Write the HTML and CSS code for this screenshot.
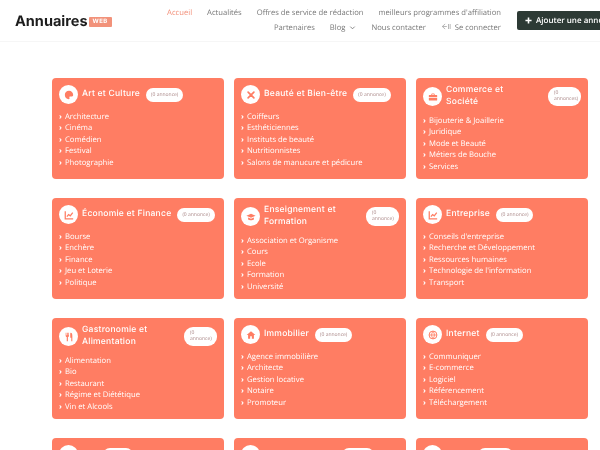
FILE: index.html
```html
<!DOCTYPE html>
<html lang="fr">
<head>
<meta charset="utf-8">
<title>Annuaires Web</title>
<link rel="stylesheet" href="styles.css">
</head>
<body>
<header class="site-header">
  <a class="logo">Annuaires <span class="logo-tag">WEB</span></a>
  <nav class="nav">
    <div class="nav-row">
      <a class="nav-active">Accueil</a>
      <a>Actualités</a>
      <a>Offres de service de rédaction</a>
      <a>meilleurs programmes d'affiliation</a>
    </div>
    <div class="nav-row">
      <a>Partenaires</a>
      <a>Blog <svg class="chev" viewBox="0 0 8 8"><path d="M1.500 3 4 5.500 6.500 3" fill="none" stroke="currentColor" stroke-width="1"/></svg></a>
      <a>Nous contacter</a>
      <a><svg class="login" viewBox="0 0 12 8"><path d="M5 1 1.500 4 5 7M1.500 4H7M9 1v6M11 1v6" fill="none" stroke="currentColor" stroke-width="1"/></svg>Se connecter</a>
    </div>
  </nav>
  <a class="add-btn"><svg class="plus" viewBox="0 0 8 8"><path d="M4 .5v7M.5 4h7" stroke="#fff" stroke-width="1.800"/></svg>Ajouter une annonce</a>
</header>
<main class="grid">
  <section class="card">
    <div class="head">
      <span class="icon"><svg viewBox="0 0 12 12"><path d="M6 1C3 1 1 3.200 1 6s2.200 5 4.500 5c1.300 0 1.300-1 1-1.700C6.200 8.500 6.700 7.800 7.600 7.800H9.500C10.500 7.800 11 7 11 5.800 11 3 8.800 1 6 1Z"/></svg></span>
      <h2 class="title">Art et Culture</h2>
      <span class="badge">(0 annonce)</span>
    </div>
    <ul class="list"><li>Architecture</li><li>Cinéma</li><li>Comédien</li><li>Festival</li><li>Photographie</li></ul>
  </section>
  <section class="card">
    <div class="head">
      <span class="icon"><svg viewBox="0 0 12 12"><path d="M2.500 2.500 9.500 9.500M9.500 2.500 2.500 9.500" stroke="#ff7d63" stroke-width="2" stroke-linecap="round"/></svg></span>
      <h2 class="title">Beauté et Bien-être</h2>
      <span class="badge">(0 annonce)</span>
    </div>
    <ul class="list"><li>Coiffeurs</li><li>Esthéticiennes</li><li>Instituts de beauté</li><li>Nutritionnistes</li><li>Salons de manucure et pédicure</li></ul>
  </section>
  <section class="card">
    <div class="head">
      <span class="icon"><svg viewBox="0 0 12 12"><path d="M4 3.500V2.500C4 2 4.500 1.700 5 1.700H7C7.500 1.700 8 2 8 2.500V3.500H10.500C11 3.500 11 4 11 4.300V6H1V4.300C1 4 1 3.500 1.500 3.500ZM5 3.500H7V2.700H5ZM1 6.800H11V9.500C11 10 10.700 10.300 10.300 10.300H1.700C1.300 10.300 1 10 1 9.500Z"/></svg></span>
      <h2 class="title">Commerce et<br>Société</h2>
      <span class="badge badge-stacked">(0 annonces)</span>
    </div>
    <ul class="list"><li>Bijouterie &amp; Joaillerie</li><li>Juridique</li><li>Mode et Beauté</li><li>Métiers de Bouche</li><li>Services</li></ul>
  </section>
  <section class="card">
    <div class="head">
      <span class="icon"><svg viewBox="0 0 12 12"><path d="M1.500 1.500V10.500H11M3.500 8 5.500 5.500 7.500 7 10.500 3" fill="none" stroke="#ff7d63" stroke-width="1.500"/></svg></span>
      <h2 class="title">Économie et Finance</h2>
      <span class="badge">(0 annonce)</span>
    </div>
    <ul class="list"><li>Bourse</li><li>Enchère</li><li>Finance</li><li>Jeu et Loterie</li><li>Politique</li></ul>
  </section>
  <section class="card">
    <div class="head">
      <span class="icon"><svg viewBox="0 0 12 12"><path d="M6 2 .5 4.500 6 7 11.500 4.500ZM2.500 6.500V9C4 10.300 8 10.300 9.500 9V6.500L6 8.100Z"/></svg></span>
      <h2 class="title">Enseignement et<br>Formation</h2>
      <span class="badge badge-stacked">(0 annonce)</span>
    </div>
    <ul class="list"><li>Association et Organisme</li><li>Cours</li><li>Ecole</li><li>Formation</li><li>Université</li></ul>
  </section>
  <section class="card">
    <div class="head">
      <span class="icon"><svg viewBox="0 0 12 12"><path d="M1.500 1.500V10.500H11M3.500 8 5.500 5.500 7.500 7 10.500 3" fill="none" stroke="#ff7d63" stroke-width="1.500"/></svg></span>
      <h2 class="title">Entreprise</h2>
      <span class="badge">(0 annonce)</span>
    </div>
    <ul class="list"><li>Conseils d'entreprise</li><li>Recherche et Développement</li><li>Ressources humaines</li><li>Technologie de l'information</li><li>Transport</li></ul>
  </section>
  <section class="card">
    <div class="head">
      <span class="icon"><svg viewBox="0 0 12 12"><path d="M2 1V4.500C2 5.500 2.800 6 3.300 6V11H4.700V6C5.200 6 6 5.500 6 4.500V1H5.200V4H4.500V1H3.500V4H2.800V1ZM8 1C9.500 1 10 2.500 10 4.500V11H8.700V7H7.500V3C7.500 2 7.500 1 8 1Z"/></svg></span>
      <h2 class="title">Gastronomie et<br>Alimentation</h2>
      <span class="badge badge-stacked">(0 annonce)</span>
    </div>
    <ul class="list"><li>Alimentation</li><li>Bio</li><li>Restaurant</li><li>Régime et Diététique</li><li>Vin et Alcools</li></ul>
  </section>
  <section class="card">
    <div class="head">
      <span class="icon"><svg viewBox="0 0 12 12"><path d="M6 1.500 .8 6H2.500V10.500H5V7.500H7V10.500H9.500V6H11.200Z"/></svg></span>
      <h2 class="title">Immobilier</h2>
      <span class="badge">(0 annonce)</span>
    </div>
    <ul class="list"><li>Agence immobilière</li><li>Architecte</li><li>Gestion locative</li><li>Notaire</li><li>Promoteur</li></ul>
  </section>
  <section class="card">
    <div class="head">
      <span class="icon"><svg viewBox="0 0 12 12"><circle cx="6" cy="6" r="4.700" fill="none" stroke="#ff7d63" stroke-width="1.200"/><path d="M1.500 6H10.500M6 1.500C3.800 4 3.800 8 6 10.500M6 1.500C8.200 4 8.200 8 6 10.500" fill="none" stroke="#ff7d63"/></svg></span>
      <h2 class="title">Internet</h2>
      <span class="badge">(0 annonce)</span>
    </div>
    <ul class="list"><li>Communiquer</li><li>E-commerce</li><li>Logiciel</li><li>Référencement</li><li>Téléchargement</li></ul>
  </section>
  <section class="card">
    <div class="head">
      <span class="icon"></span>
      <span class="badge badge-short"></span>
    </div>
  </section>
  <section class="card">
    <div class="head">
      <span class="icon"></span>
      <span class="badge badge-long"></span>
    </div>
  </section>
  <section class="card">
    <div class="head">
      <span class="icon"></span>
      <span class="badge badge-mid"></span>
    </div>
  </section>
</main>
</body>
</html>
```
FILE: styles.css
```css
* { box-sizing: border-box; }
html, body { margin: 0; height: 450px; overflow: hidden; background: #fff; }
body {
  font-family: "Open Sans", "Liberation Sans", sans-serif;
  text-rendering: geometricPrecision;
  filter: blur(0.6px);
}

.site-header {
  display: flex;
  align-items: center;
  height: 42px;
  padding-left: 15px;
  border-bottom: 1px solid #f6f6f6;
  width: 700px;
}
.logo {
  flex: none;
  width: 150px;
  font-family: Inter, "Liberation Sans", sans-serif;
  font-weight: 700;
  font-size: 14.500px;
  color: #1d1d1d;
  display: flex;
  align-items: center;
  gap: 1px;
  padding-top: 2px;
}
.logo-tag {
  background: #f2927a;
  color: #fff;
  font-size: 6px;
  padding: 2px 4px;
  line-height: 6px;
  border-radius: 1px;
  letter-spacing: .4px;
}
.nav {
  flex: none;
  width: 336px;
  font-size: 7.650px;
  line-height: 15px;
  color: #777;
}
.nav-row {
  display: flex;
  justify-content: flex-end;
  gap: 15px;
}
.nav-active { color: #f2907a; }
.nav a { white-space: nowrap; }
.chev { width: 7px; height: 7px; margin-left: 2px; vertical-align: -1px; }
.login { width: 10px; height: 7px; margin-right: 4px; color: #aaa; }
.add-btn {
  flex: none;
  margin-left: 16px;
  height: 19px;
  padding: 0 10px 0 8px;
  display: flex;
  align-items: center;
  gap: 4px;
  background: #2d3a35;
  color: #fff;
  font-size: 8px;
  font-weight: 600;
  border-radius: 2px;
}
.plus { width: 7px; height: 7px; }

.grid {
  display: grid;
  grid-template-columns: repeat(3, 172px);
  grid-auto-rows: 101px;
  gap: 19px 10px;
  padding: 36px 0 0 52px;
}
.card {
  background: #ff7d63;
  border-radius: 4px;
  padding: 7px;
  color: #fff;
}
.head {
  display: flex;
  align-items: flex-start;
  gap: 4px;
  min-height: 19px;
  margin-bottom: 7.500px;
}
.icon {
  flex: none;
  width: 19px;
  height: 19px;
  border-radius: 50%;
  background: #fff;
  display: flex;
  align-items: center;
  justify-content: center;
  align-self: center;
}
.icon svg { width: 10px; height: 10px; fill: #ff7d63; }
.title {
  margin: 0;
  font-family: Inter, "Liberation Sans", sans-serif;
  font-weight: 500;
  font-size: 8.500px;
  line-height: 11.500px;
  letter-spacing: .25px;
  align-self: center;
}
.badge {
  flex: none;
  margin-left: 2px;
  background: #fff;
  color: #a88;
  border-radius: 8px;
  font-size: 5px;
  line-height: 14px;
  height: 14px;
  padding: 0 5px;
  align-self: center;
}
.badge-stacked {
  margin-left: auto;
  width: 33px;
  height: 19px;
  line-height: 5.500px;
  padding: 4px 6px;
  border-radius: 9px;
  align-self: flex-start;
  margin-top: 2px;
  white-space: normal;
}
.badge-short { width: 30px; margin-left: 21px; }
.badge-long { width: 32px; margin-left: 78px; }
.badge-mid { width: 35px; margin-left: 32px; }
.list {
  list-style: none;
  margin: 0;
  padding: 0;
  font-size: 7.700px;
  line-height: 11.500px;
}
.list li::before {
  content: "›";
  font-weight: 700;
  display: inline-block;
  width: 6px;
}
```
